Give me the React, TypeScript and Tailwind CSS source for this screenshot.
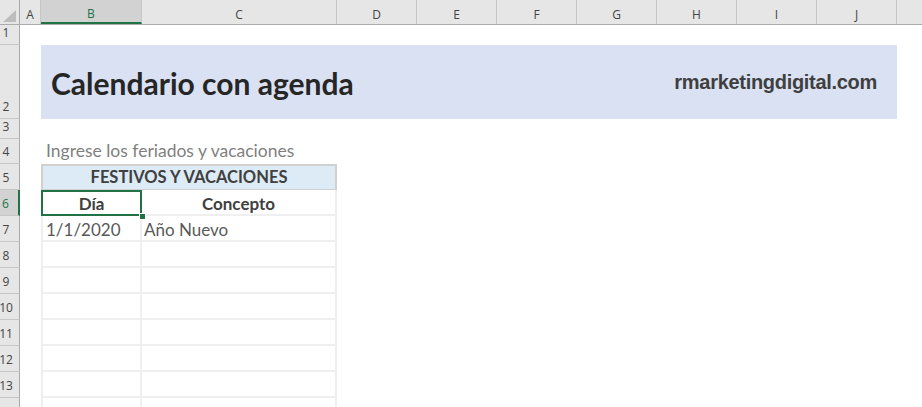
import React from 'react'

const cols = [
  { name: 'A', w: 'w-[21px]' },
  { name: 'B', w: 'w-[101px]', selected: true },
  { name: 'C', w: 'w-[195px]' },
  { name: 'D', w: 'w-[80px]' },
  { name: 'E', w: 'w-[80px]' },
  { name: 'F', w: 'w-[80px]' },
  { name: 'G', w: 'w-[80px]' },
  { name: 'H', w: 'w-[80px]' },
  { name: 'I', w: 'w-[80px]' },
  { name: 'J', w: 'w-[80px]' },
]

// row 14 is only partly on screen, its number falls below the edge
const rows = [
  { n: '1', h: 'h-[20px]' },
  { n: '2', h: 'h-[74px]' },
  { n: '3', h: 'h-[20px]' },
  { n: '4', h: 'h-[25px]' },
  { n: '5', h: 'h-[26px]' },
  { n: '6', h: 'h-[26px]', selected: true },
  { n: '7', h: 'h-[26px]' },
  { n: '8', h: 'h-[26px]' },
  { n: '9', h: 'h-[26px]' },
  { n: '10', h: 'h-[26px]' },
  { n: '11', h: 'h-[26px]' },
  { n: '12', h: 'h-[26px]' },
  { n: '13', h: 'h-[26px]' },
  { n: '', h: 'h-[26px]' },
]

const holidays = [
  { day: '1/1/2020', concept: 'Año Nuevo' },
  { day: '', concept: '' },
  { day: '', concept: '' },
  { day: '', concept: '' },
  { day: '', concept: '' },
  { day: '', concept: '' },
  { day: '', concept: '' },
  { day: '', concept: '' },
]

const headerFont = { fontFamily: '"Open Sans", "Noto Sans", sans-serif' }
const cellFont = { fontFamily: 'Lato, "Open Sans", sans-serif' }

function ColumnHeaders() {
  return (
    <div className="flex h-[25px] bg-[#e6e6e6] border-b border-[#ababab] text-[12px] text-[#444]" style={headerFont}>
      <div className="w-[20px] shrink-0 border-r border-[#ababab] relative">
        <svg className="absolute left-[3px] top-[10px]" width="14" height="13" viewBox="0 0 14 13">
          <polygon points="13,0 13,12 0,12" fill="#bdbdbd" />
        </svg>
      </div>
      {cols.map((c) => (
        <div
          key={c.name}
          className={
            c.selected
              ? `${c.w} shrink-0 flex items-center justify-center pt-[5px] bg-[#d2d2d2] border-r border-[#c6c6c6] border-b-2 border-b-[#217346] text-[#217346]`
              : `${c.w} shrink-0 flex items-center justify-center pt-[5px] border-r border-[#c6c6c6]`
          }
        >
          {c.name}
        </div>
      ))}
      <div className="flex-1" />
    </div>
  )
}

function RowHeaders() {
  return (
    <div className="w-[20px] shrink-0 flex flex-col bg-[#e6e6e6] text-[12px] text-[#444]" style={headerFont}>
      {rows.map((r, i) => (
        <div
          key={i}
          className={
            r.selected
              ? `${r.h} shrink-0 flex items-end justify-center pr-[7px] pb-[2px] bg-[#d2d2d2] border-b border-[#c6c6c6] border-r-2 border-r-[#217346] text-[#217346]`
              : `${r.h} shrink-0 flex items-end justify-center pr-[7px] pb-[2px] border-b border-[#c6c6c6] border-r border-r-[#ababab]`
          }
        >
          {r.n}
        </div>
      ))}
    </div>
  )
}

export default function App() {
  return (
    <div className="w-[922px] h-[407px] overflow-hidden bg-white">
      <ColumnHeaders />
      <div className="flex">
        <RowHeaders />
        <div className="flex-1 flex flex-col" style={cellFont}>
          <div className="h-[20px] shrink-0" />

          <div className="h-[74px] shrink-0 flex">
            <div className="w-[21px] shrink-0" />
            <div className="w-[856px] shrink-0 bg-[#d9e1f2] flex items-end justify-between pl-[10px] pr-[20px]">
              <h1 className="text-[30px] leading-none font-bold text-[#262626] mb-[21px]">Calendario con agenda</h1>
              <span
                className="text-[20px] leading-none font-bold text-[#3f3f3f] tracking-[-0.3px] mb-[27px]"
                style={{ fontFamily: '"Liberation Sans", Arial, sans-serif' }}
              >
                rmarketingdigital.com
              </span>
            </div>
          </div>

          <div className="h-[20px] shrink-0" />

          <div className="h-[25px] shrink-0 flex items-end pl-[26px] pb-[5px] text-[17.5px] leading-none text-[#7f7f7f]">
            Ingrese los feriados y vacaciones
          </div>

          <div className="ml-[21px] w-[296px] flex flex-col text-[17px] leading-none">
            <div className="h-[26px] shrink-0 flex items-end justify-center pb-[4px] bg-[#ddebf7] border-2 border-b border-[#d0d0d0] text-[16.5px] font-bold text-[#404040]">
              FESTIVOS Y VACACIONES
            </div>
            <div className="h-[26px] shrink-0 flex font-bold text-[#404040]">
              <div className="w-[101px] shrink-0 relative flex items-end justify-center pb-[4px]">
                Día
                <div className="absolute inset-0 border-2 border-[#217346]" />
                <div className="absolute right-[-4px] bottom-[-4px] w-[7px] h-[7px] bg-[#217346] border border-white" />
              </div>
              <div className="flex-1 flex items-end justify-center pb-[2px] border-r-2 border-b-2 border-[#efefef]">
                Concepto
              </div>
            </div>
            {holidays.map((h, i) => (
              <div key={i} className="h-[26px] shrink-0 flex text-[#595959]">
                <div className="w-[101px] shrink-0 flex items-end pl-[3px] pb-[2px] border-l-2 border-r-2 border-b-2 border-[#efefef]">
                  {h.day}
                </div>
                <div className="flex-1 flex items-end pl-[2px] pb-[2px] border-r-2 border-b-2 border-[#efefef]">
                  {h.concept}
                </div>
              </div>
            ))}
          </div>
        </div>
      </div>
    </div>
  )
}
